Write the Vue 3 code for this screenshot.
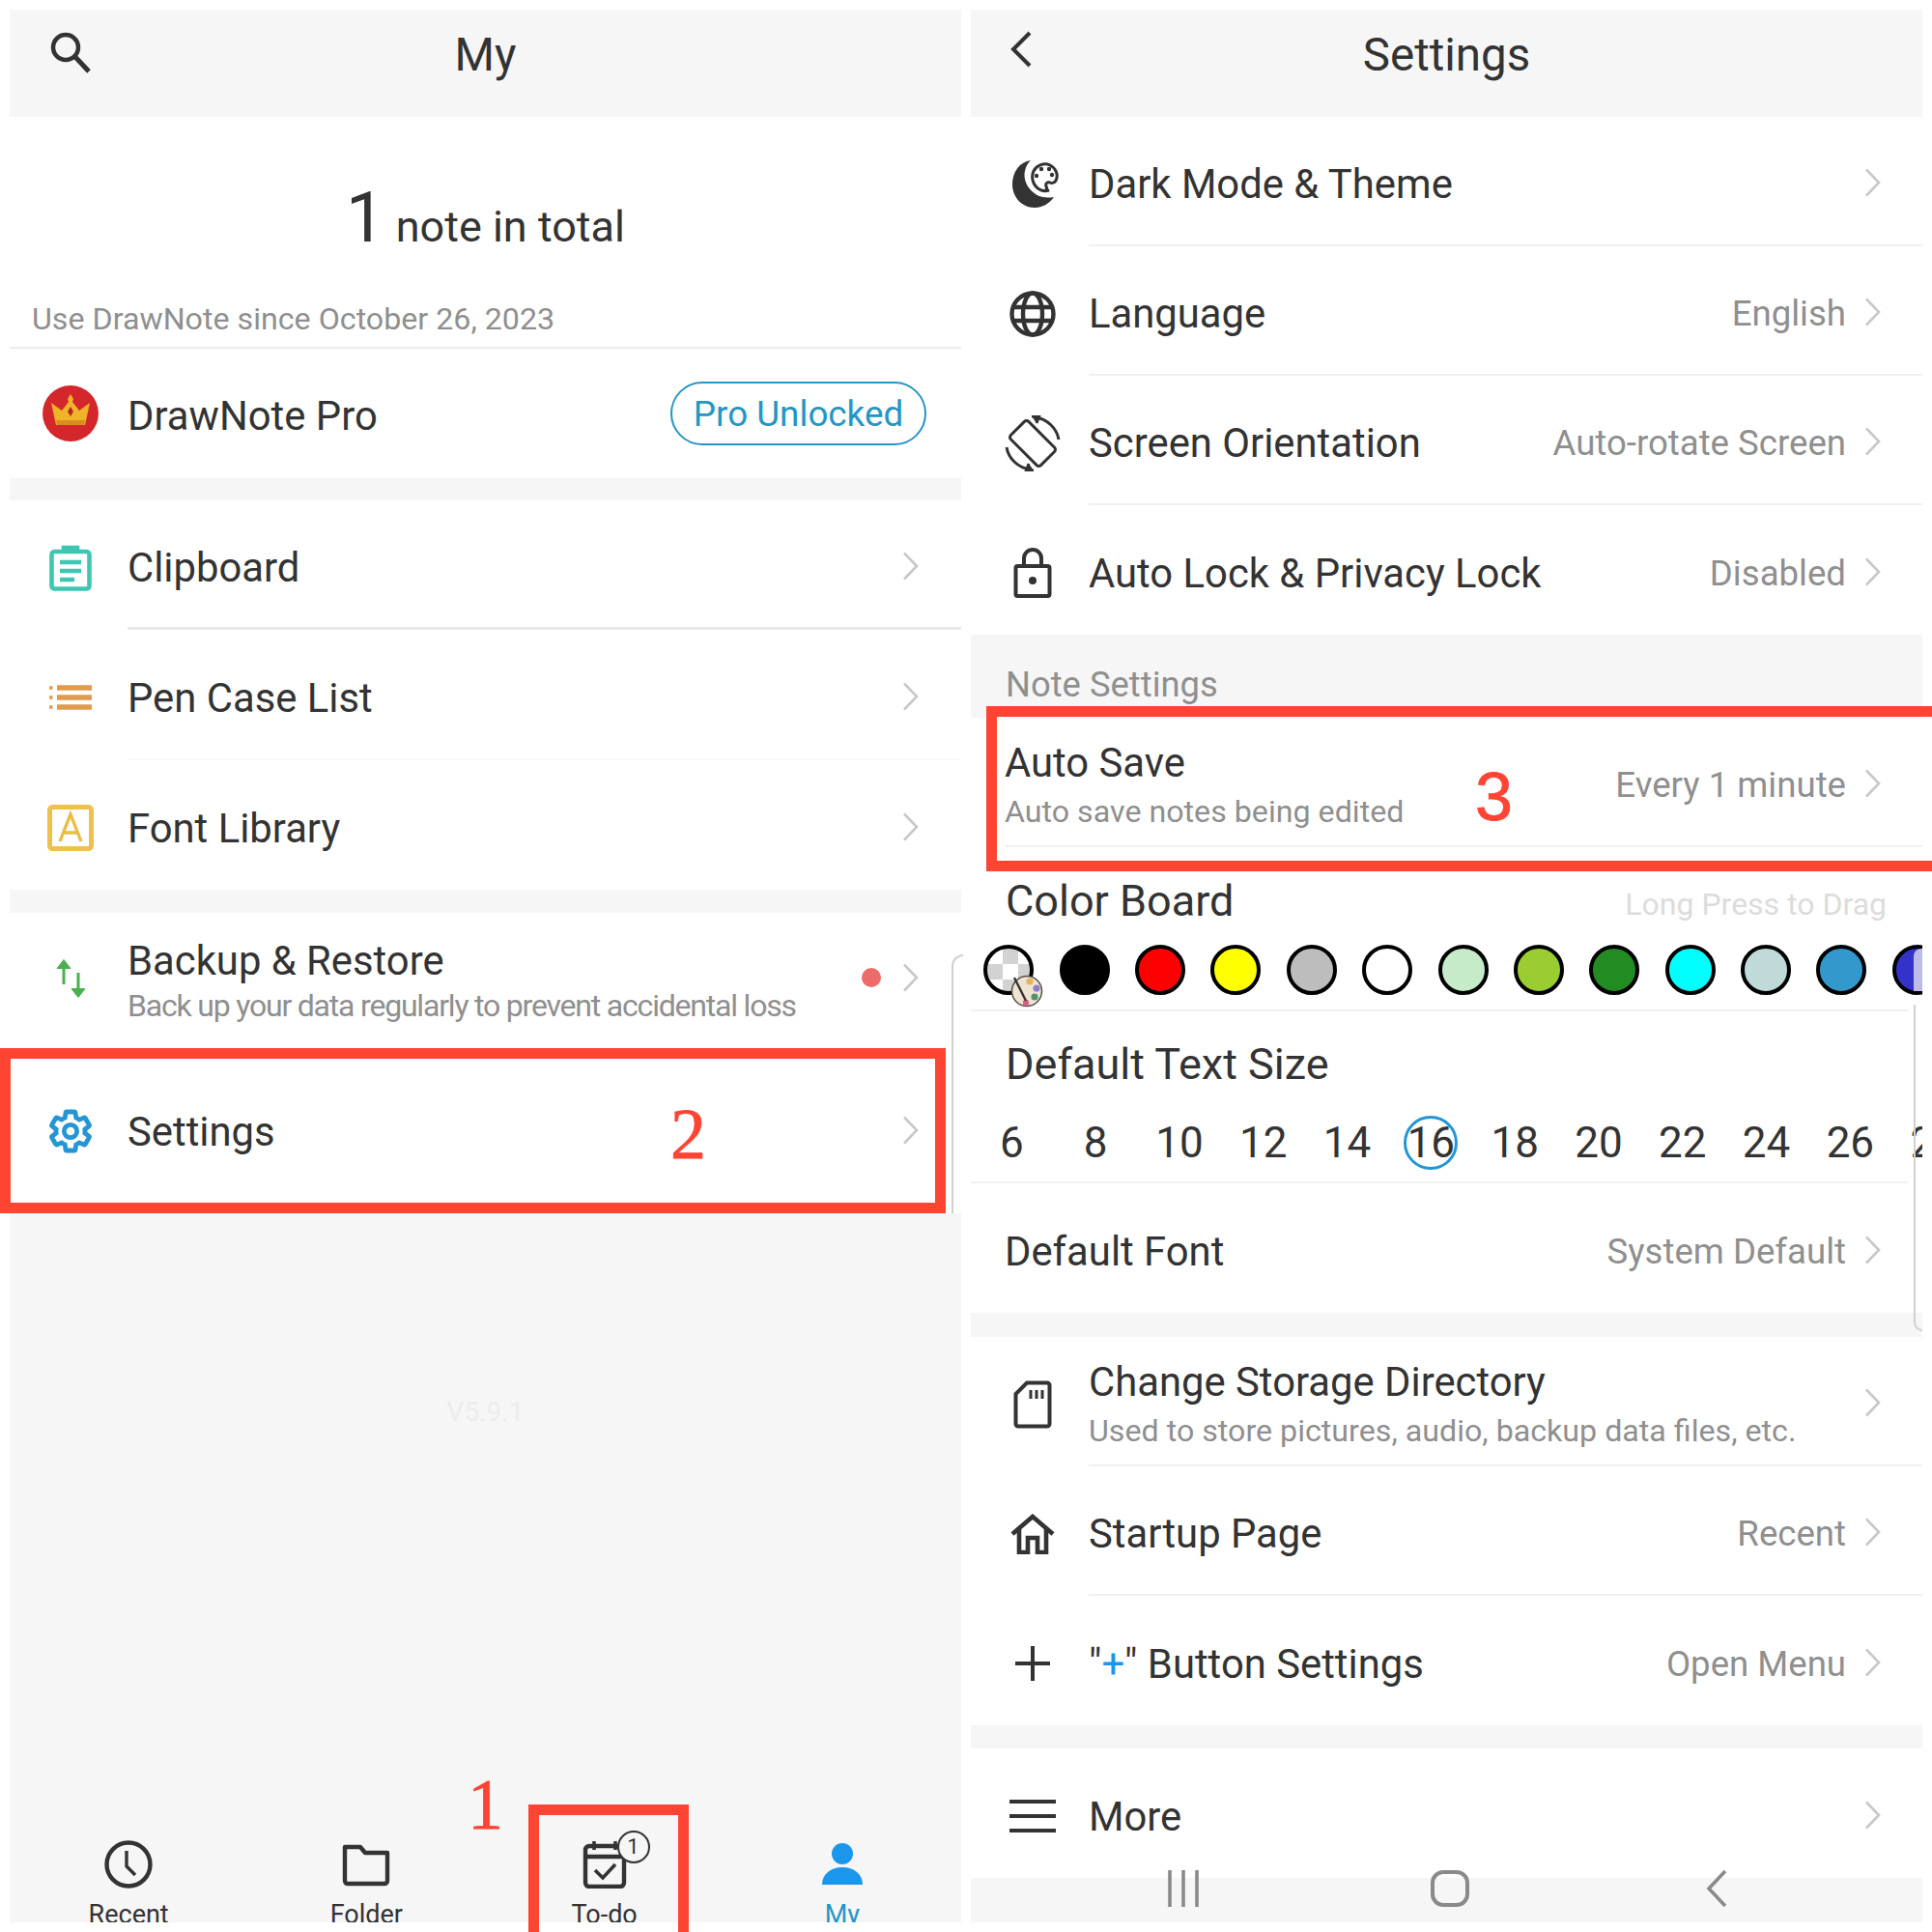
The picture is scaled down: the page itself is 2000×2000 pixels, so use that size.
<template>
  <div class="page">
    <svg class="defs" width="0" height="0">
      <symbol id="chev" viewBox="0 0 17 30"><path d="M2 1.5 15 15 2 28.5" fill="none" stroke="#c8c8c8" stroke-width="2.6" /></symbol>
    </svg>

    <!-- left phone screen -->
    <section class="panel">
      <header class="bar">
        <svg class="bar-btn search" viewBox="0 0 44 44" fill="none" stroke="#333" stroke-width="4.5">
          <circle cx="17" cy="17" r="13" />
          <path d="M26.5 26.5 41 42" stroke-width="5" />
        </svg>
        <span>My</span>
      </header>

      <div class="summary">
        <div class="count"><b>1</b> note in total</div>
        <div class="since">Use DrawNote since October 26, 2023</div>
      </div>

      <div class="row pro">
        <div class="ico">
          <svg width="58" height="58" viewBox="0 0 58 58">
            <circle cx="29" cy="29" r="29" fill="#d3272b" />
            <path d="M29 9l3 5-1 3 7 9 11-8-5 23H14L9 18l11 8 7-9-1-3z" fill="#f0b429" />
            <path d="M14 36h30l-1 5H15z" fill="#d98c1f" />
            <path d="M29 22l3 5-3 5-3-5z" fill="#b3261e" />
          </svg>
        </div>
        <div class="row-body plain">
          <span class="title">DrawNote Pro</span>
          <span class="pill">Pro Unlocked</span>
        </div>
      </div>

      <div class="band"></div>

      <div class="row">
        <div class="ico">
          <svg width="44" height="48" viewBox="0 0 44 48" fill="none" stroke="#3fc6b2" stroke-width="4.6">
            <rect x="2.5" y="7" width="39" height="38.5" rx="3" />
            <path d="M15 7V3h14v4" fill="#3fc6b2" />
            <path d="M11 18h22M11 27h22M11 36h15" />
          </svg>
        </div>
        <div class="row-body strong">
          <span class="title">Clipboard</span>
          <svg class="chev"><use href="#chev" /></svg>
        </div>
      </div>
      <div class="row mid">
        <div class="ico">
          <svg width="44" height="26" viewBox="0 0 44 26" fill="none" stroke="#e09c4c" stroke-width="5.4">
            <path d="M0 3h3.5M0 13h3.5M0 23h3.5" stroke-width="3.6" />
            <path d="M8 3h36M8 13h36M8 23h36" />
          </svg>
        </div>
        <div class="row-body faint">
          <span class="title">Pen Case List</span>
          <svg class="chev"><use href="#chev" /></svg>
        </div>
      </div>
      <div class="row">
        <div class="ico">
          <svg width="48" height="48" viewBox="0 0 48 48" fill="none">
            <rect x="2.5" y="2.5" width="43" height="43" rx="3" stroke="#eec14c" stroke-width="5" />
            <path d="M13 38 24 10l11 28M17 29h14" stroke="#e9bd4a" stroke-width="3.4" />
          </svg>
        </div>
        <div class="row-body plain">
          <span class="title">Font Library</span>
          <svg class="chev"><use href="#chev" /></svg>
        </div>
      </div>

      <div class="band wide"></div>

      <div class="row tall">
        <div class="ico">
          <svg width="33" height="42" viewBox="0 0 33 42" fill="#4caf50" stroke="#4caf50" stroke-width="3">
            <path d="M9 8v19" fill="none" />
            <path d="M2 10.5 9 1.5l7 9z" stroke-width="1" />
            <path d="M24 15v19" fill="none" />
            <path d="M17 31.5 24 40.5l7-9z" stroke-width="1" />
          </svg>
        </div>
        <div class="row-body plain">
          <div class="stack">
            <span class="title">Backup &amp; Restore</span>
            <span class="sub tight">Back up your data regularly to prevent accidental loss</span>
          </div>
          <i class="dot"></i>
          <svg class="chev"><use href="#chev" /></svg>
        </div>
      </div>
      <div class="row settings-row">
        <div class="ico">
          <svg width="50" height="50" viewBox="0 0 24 24" fill="none" stroke="#2596d4" stroke-width="2.3">
            <path d="M19.14 12.94c.04-.3.06-.61.06-.94 0-.32-.02-.64-.07-.94l2.03-1.58c.18-.14.23-.41.12-.61l-1.92-3.32c-.12-.22-.37-.29-.59-.22l-2.39.96c-.5-.38-1.03-.7-1.62-.94l-.36-2.54c-.04-.24-.24-.41-.48-.41h-3.84c-.24 0-.43.17-.47.41l-.36 2.54c-.59.24-1.13.57-1.62.94l-2.39-.96c-.22-.08-.47 0-.59.22L2.74 8.87c-.12.21-.08.47.12.61l2.03 1.58c-.05.3-.09.63-.09.94s.02.64.07.94l-2.03 1.58c-.18.14-.23.41-.12.61l1.92 3.32c.12.22.37.29.59.22l2.39-.96c.5.38 1.03.7 1.62.94l.36 2.54c.05.24.24.41.48.41h3.84c.24 0 .44-.17.47-.41l.36-2.54c.59-.24 1.13-.56 1.62-.94l2.39.96c.22.08.47 0 .59-.22l1.92-3.32c.12-.22.07-.47-.12-.61l-2.01-1.58z" />
            <circle cx="12" cy="12" r="3.2" />
          </svg>
        </div>
        <div class="row-body plain">
          <span class="title">Settings</span>
          <svg class="chev"><use href="#chev" /></svg>
        </div>
      </div>

      <div class="empty">
        <span class="version">V5.9.1</span>
        <nav class="tabs">
          <div class="tab">
            <svg width="50" height="50" viewBox="0 0 50 50" fill="none" stroke="#333" stroke-width="4.4">
              <circle cx="25" cy="25" r="22.5" />
              <path d="M23 11v16l9 9" stroke-width="3.4" />
            </svg>
            <span>Recent</span>
          </div>
          <div class="tab">
            <svg width="50" height="50" viewBox="0 0 50 50" fill="none" stroke="#333" stroke-width="4.4">
              <path d="M3 7h16l5 6h23v29a3 3 0 0 1-3 3H6a3 3 0 0 1-3-3z" stroke-linejoin="round" />
            </svg>
            <span>Folder</span>
          </div>
          <div class="tab">
            <svg width="50" height="50" viewBox="0 0 50 50" fill="none" stroke="#333" stroke-width="4.4">
              <rect x="5" y="6" width="40" height="42" rx="4" />
              <path d="M5 17h40" />
              <path d="M14 1v9M36 1v9" stroke-width="3.6" />
              <path d="M15 31l8 8 13-14" stroke-width="3.6" />
            </svg>
            <i class="badge">1</i>
            <span>To-do</span>
          </div>
          <div class="tab active">
            <svg width="50" height="50" viewBox="0 0 50 50" fill="#1a97ec">
              <circle cx="25" cy="14" r="11" />
              <path d="M4 46c0-11 9-18 21-18s21 7 21 18z" />
            </svg>
            <span>My</span>
          </div>
        </nav>
      </div>
    </section>

    <!-- right phone screen -->
    <section class="panel right">
      <header class="bar">
        <svg class="bar-btn back" viewBox="0 0 24 38" fill="none" stroke="#333" stroke-width="4">
          <path d="M21 2 4 19l17 17" />
        </svg>
        <span>Settings</span>
      </header>

      <div class="row">
        <div class="ico">
          <svg width="54" height="50" viewBox="0 0 54 50">
            <path d="M25 0C13 2 6 12 6 25c0 13 10 24 23 24 8 0 15-4 20-11-6 1-13 1-19-3-9-6-13-16-11-24 1-5 3-8 6-11z" fill="#333" />
            <path d="M44 31c-3 1-7 1-10-1-7-4-9-13-6-19s11-9 17-6 9 10 6 16c-1 2-4 3-6 2-3-1-5 1-4 4 1 2 1 3-1 4z" fill="none" stroke="#333" stroke-width="3" />
            <circle cx="31" cy="16" r="2.2" fill="#333" /><circle cx="36" cy="9" r="2.2" fill="#333" />
            <circle cx="44" cy="9" r="2.2" fill="#333" /><circle cx="47" cy="15" r="2.2" fill="#333" />
          </svg>
        </div>
        <div class="row-body">
          <span class="title">Dark Mode &amp; Theme</span>
          <svg class="chev"><use href="#chev" /></svg>
        </div>
      </div>
      <div class="row">
        <div class="ico">
          <svg width="48" height="48" viewBox="0 0 48 48" fill="none" stroke="#333" stroke-width="4.4">
            <circle cx="24" cy="24" r="21.5" />
            <ellipse cx="24" cy="24" rx="10" ry="21.5" />
            <path d="M3 17h42M3 31h42" />
          </svg>
        </div>
        <div class="row-body">
          <span class="title">Language</span>
          <span class="value">English</span>
          <svg class="chev"><use href="#chev" /></svg>
        </div>
      </div>
      <div class="row">
        <div class="ico">
          <svg width="58" height="58" viewBox="0 0 58 58" fill="none" stroke="#333" stroke-width="3">
            <rect x="16" y="7" width="26" height="44" rx="3" transform="rotate(-45 29 29)" />
            <path d="M32 2c12 2 22 11 24 23M26 56C14 54 4 45 2 33" />
            <path d="M28 1l8-1-3 8M30 57l-8 1 3-8" fill="#333" />
          </svg>
        </div>
        <div class="row-body">
          <span class="title">Screen Orientation</span>
          <span class="value">Auto-rotate Screen</span>
          <svg class="chev"><use href="#chev" /></svg>
        </div>
      </div>
      <div class="row">
        <div class="ico">
          <svg width="40" height="52" viewBox="0 0 40 52" fill="none" stroke="#333" stroke-width="4">
            <rect x="2.5" y="19" width="35" height="31" rx="2" />
            <path d="M11 19v-8a9 9 0 0 1 18 0v8" />
            <circle cx="20" cy="34" r="4" fill="#333" stroke="none" />
          </svg>
        </div>
        <div class="row-body plain">
          <span class="title">Auto Lock &amp; Privacy Lock</span>
          <span class="value">Disabled</span>
          <svg class="chev"><use href="#chev" /></svg>
        </div>
      </div>

      <div class="section-label">Note Settings</div>

      <div class="row flush">
        <div class="row-body">
          <div class="stack">
            <span class="title">Auto Save</span>
            <span class="sub">Auto save notes being edited</span>
          </div>
          <span class="value">Every 1 minute</span>
          <svg class="chev"><use href="#chev" /></svg>
        </div>
      </div>

      <div class="color-board">
        <div class="block-head">
          <span class="title big">Color Board</span>
          <span class="hint">Long Press to Drag</span>
        </div>
        <div class="swatches">
          <div v-for="(c, i) in swatches" :key="i" class="cell">
            <i class="swatch" :class="{ clear: !c }" :style="c ? { background: c } : null"></i>
          </div>
          <svg class="palette" width="34" height="34" viewBox="0 0 34 34">
            <circle cx="17" cy="17" r="15.5" fill="#efe3d2" stroke="#55504a" stroke-width="1.5" />
            <circle cx="20" cy="7" r="3.6" fill="#e5b35c" /><circle cx="27" cy="14" r="3.6" fill="#8a82c9" />
            <circle cx="25" cy="23" r="3.6" fill="#4f9470" /><circle cx="16" cy="29" r="3.2" fill="#d9608a" />
            <path d="M4 3l12 24" stroke="#333" stroke-width="2.4" />
          </svg>
          <i class="swatch-edge"></i>
        </div>
      </div>

      <div class="text-size">
        <div class="title big">Default Text Size</div>
        <div class="sizes">
          <span v-for="s in sizes" :key="s" class="size" :class="{ on: s === 16 }">{{ s }}</span>
        </div>
      </div>

      <div class="row flush">
        <div class="row-body plain">
          <span class="title">Default Font</span>
          <span class="value">System Default</span>
          <svg class="chev"><use href="#chev" /></svg>
        </div>
      </div>

      <div class="band wider"></div>

      <div class="row">
        <div class="ico">
          <svg width="40" height="50" viewBox="0 0 40 50" fill="none" stroke="#333" stroke-width="4">
            <path d="M14 2.5h21a2.5 2.5 0 0 1 2.5 2.5v40a2.5 2.5 0 0 1-2.5 2.5H5A2.5 2.5 0 0 1 2.5 45V14z" />
            <path d="M18 10v9M24 10v9M30 10v9" stroke-width="3" />
          </svg>
        </div>
        <div class="row-body">
          <div class="stack">
            <span class="title">Change Storage Directory</span>
            <span class="sub">Used to store pictures, audio, backup data files, etc.</span>
          </div>
          <svg class="chev"><use href="#chev" /></svg>
        </div>
      </div>
      <div class="row">
        <div class="ico">
          <svg width="46" height="42" viewBox="0 0 46 42" fill="none" stroke="#333" stroke-width="4.6">
            <path d="M2 21 23 3l21 18" />
            <path d="M9 16v24h9V25h10v15h9V16" />
          </svg>
        </div>
        <div class="row-body">
          <span class="title">Startup Page</span>
          <span class="value">Recent</span>
          <svg class="chev"><use href="#chev" /></svg>
        </div>
      </div>
      <div class="row">
        <div class="ico">
          <svg width="36" height="36" viewBox="0 0 36 36" fill="none" stroke="#333" stroke-width="4">
            <path d="M0 18h36M18 0v36" />
          </svg>
        </div>
        <div class="row-body plain">
          <span class="title">"<em>+</em>" Button Settings</span>
          <span class="value">Open Menu</span>
          <svg class="chev"><use href="#chev" /></svg>
        </div>
      </div>

      <div class="band wide"></div>

      <div class="row">
        <div class="ico">
          <svg width="48" height="34" viewBox="0 0 48 34" fill="none" stroke="#333" stroke-width="4">
            <path d="M0 2h48M0 17h48M0 32h48" />
          </svg>
        </div>
        <div class="row-body plain">
          <span class="title">More</span>
          <svg class="chev"><use href="#chev" /></svg>
        </div>
      </div>

      <div class="sys-nav">
        <svg width="36" height="38" viewBox="0 0 36 38" fill="none" stroke="#8a8a8a" stroke-width="3.6"><path d="M4 0v38M18 0v38M32 0v38" /></svg>
        <svg width="40" height="38" viewBox="0 0 40 38" fill="none" stroke="#8a8a8a" stroke-width="4"><rect x="2" y="2" width="36" height="34" rx="11" /></svg>
        <svg width="24" height="38" viewBox="0 0 24 38" fill="none" stroke="#8a8a8a" stroke-width="3.6"><path d="M21 1 4 19l17 18" /></svg>
      </div>
    </section>

    <!-- things drawn on top of the screens -->
    <i class="edge edge-left"></i>
    <i class="edge edge-right"></i>
    <div class="mark mark-1"></div>
    <div class="mark mark-2"></div>
    <div class="mark mark-3"></div>
    <span class="num num-1">1</span>
    <span class="num num-2">2</span>
    <span class="num num-3">3</span>
  </div>
</template>

<script setup>
const swatches = [
  null, '#000000', '#ff0000', '#ffff00', '#bdbdbd', '#ffffff', '#c6ebc9',
  '#9acd32', '#228b22', '#00ffff', '#c0d9d9', '#3399cc', '#3333cc'
]
const sizes = [6, 8, 10, 12, 14, 16, 18, 20, 22, 24, 26, 28]
</script>

<style>
html, body {
  margin: 0;
  background: #fff;
}
</style>

<style scoped>
.page {
  position: relative;
  width: 2000px;
  height: 2000px;
  box-sizing: border-box;
  padding: 10px;
  display: flex;
  gap: 10px;
  overflow: hidden;
  background: #fff;
  color: #333;
  font-family: Roboto, "Liberation Sans", sans-serif;
}

.defs {
  position: absolute;
}

.panel {
  flex: 1;
  min-width: 0;
  display: flex;
  flex-direction: column;
  overflow: hidden;
}

.bar {
  position: relative;
  height: 111px;
  flex: none;
  display: flex;
  align-items: center;
  justify-content: center;
  background: #f6f6f6;
  font-size: 47.5px;
  padding-bottom: 18px;
  box-sizing: border-box;
}

.bar-btn {
  position: absolute;
}

.search {
  left: 41px;
  top: 22px;
  width: 44px;
  height: 44px;
}

.back {
  left: 40px;
  top: 22px;
  width: 24px;
  height: 38px;
}

.summary {
  height: 240px;
  flex: none;
  box-sizing: border-box;
  border-bottom: 2px solid #ececec;
  display: flex;
  flex-direction: column;
  position: relative;
}

.count {
  margin-top: 63px;
  text-align: center;
  font-size: 45px;
  line-height: 84px;
  color: #333;
}

.count b {
  font-size: 72px;
  font-weight: 400;
}

.since {
  position: absolute;
  left: 23px;
  bottom: 9px;
  font-size: 32.2px;
  line-height: 40px;
  color: #8f8f8f;
}

.row {
  height: 134px;
  flex: none;
  display: flex;
  align-items: center;
}

.row.mid {
  height: 135px;
}

.row.tall {
  height: 140px;
}

.row.settings-row {
  height: 171px;
}

.row.flush {
  padding-left: 35px;
}

.ico {
  width: 122px;
  flex: none;
  box-sizing: border-box;
  padding: 5px 0 0 4px;
  display: flex;
  justify-content: center;
  align-items: center;
}

.right .ico {
  padding-left: 6px;
}

.row.pro .ico {
  padding-top: 0;
}

.row.tall .ico {
  padding-top: 0;
  margin-top: -5px;
}

.row.settings-row .ico {
  padding-top: 0;
}

.row-body {
  flex: 1;
  min-width: 0;
  height: 100%;
  box-sizing: border-box;
  display: flex;
  align-items: center;
  padding: 8px 44px 0 0;
  border-bottom: 2px solid #f0f0f0;
}

.right .row-body {
  padding-right: 43px;
}

.row-body.plain {
  border-bottom: 0;
}

.row-body.strong {
  border-bottom: 3px solid #e9e9e9;
}

.row-body.faint {
  border-bottom-color: #f9f9f9;
}

.row.pro .row-body {
  padding-top: 6px;
}

.row.tall .row-body {
  padding-top: 2px;
}

.row.settings-row .row-body {
  padding-top: 3px;
}

.stack {
  display: flex;
  flex-direction: column;
  gap: 6px;
  min-width: 0;
  margin-right: auto;
}

.row.tall .stack {
  gap: 2px;
}

.title {
  font-size: 41.8px;
  line-height: 48px;
  color: #333;
  margin-right: auto;
}

.title.big {
  font-size: 45px;
}

.title em {
  font-style: normal;
  color: #1a97ec;
}

.sub {
  font-size: 32.2px;
  line-height: 40px;
  color: #8f8f8f;
}

.sub.tight {
  font-size: 32px;
  letter-spacing: -1.2px;
}

.value {
  font-size: 36.6px;
  line-height: 44px;
  color: #8f8f8f;
  margin-right: 19px;
}

.chev {
  width: 17px;
  height: 30px;
  flex: none;
  margin-top: -4px;
}

.row.tall .chev {
  margin-top: -8px;
}

.pill {
  height: 66px;
  width: 265px;
  margin: -6px -8px 0 0;
  box-sizing: border-box;
  border: 2px solid #2596c4;
  border-radius: 33px;
  display: flex;
  align-items: center;
  justify-content: center;
  font-size: 36.8px;
  color: #2596c4;
}

.dot {
  width: 20px;
  height: 20px;
  border-radius: 50%;
  background: #ee6b6b;
  margin: -8px 22px 0 0;
}

.band {
  height: 23px;
  flex: none;
  background: #f6f6f6;
}

.band.wide {
  height: 24px;
}

.band.wider {
  height: 25px;
}

.section-label {
  height: 86px;
  flex: none;
  box-sizing: border-box;
  background: #f6f6f6;
  padding: 30px 0 0 36px;
  font-size: 36.4px;
  line-height: 44px;
  color: #8f8f8f;
}

.color-board {
  height: 170px;
  flex: none;
  box-sizing: border-box;
  margin-right: 15px;
  border-bottom: 2px solid #f0f0f0;
  position: relative;
}

.block-head {
  display: flex;
  align-items: center;
  justify-content: space-between;
  padding: 30px 22px 0 36px;
}

.hint {
  font-size: 32px;
  line-height: 44px;
  margin-top: 7px;
  color: #dcdcdc;
}

.swatches {
  position: relative;
  display: flex;
  width: 985px;
  height: 76px;
  margin-top: 18px;
  overflow: hidden;
}

.cell {
  width: 78.4px;
  flex: none;
  height: 56px;
  display: flex;
  align-items: center;
  justify-content: center;
}

.swatch {
  width: 52px;
  height: 52px;
  box-sizing: border-box;
  border: 4px solid #000;
  border-radius: 50%;
}

.swatch.clear {
  background: repeating-conic-gradient(#d2d2d2 0 25%, #fff 0 50%) 0 0 / 32px 32px;
}

.palette {
  position: absolute;
  left: 41px;
  top: 33px;
}

.swatch-edge {
  position: absolute;
  left: 976px;
  top: 6px;
  width: 10px;
  height: 44px;
  border-radius: 8px 0 0 0;
  background: #bdbbe8;
}

.text-size {
  height: 178px;
  flex: none;
  box-sizing: border-box;
  margin-right: 15px;
  border-bottom: 2px solid #f0f0f0;
  padding: 31px 0 0 36px;
}

.sizes {
  display: flex;
  margin: 29px 0 0 -37px;
  width: 1100px;
}

.size {
  position: relative;
  width: 86.8px;
  flex: none;
  text-align: center;
  font-size: 44px;
  line-height: 56px;
}

.size.on::after {
  content: "";
  position: absolute;
  left: 15.4px;
  top: 0;
  width: 56px;
  height: 56px;
  box-sizing: border-box;
  border: 3px solid #2596d4;
  border-radius: 50%;
}

.empty {
  flex: 1;
  position: relative;
  background: #f6f6f6;
  display: flex;
  flex-direction: column;
  justify-content: flex-end;
  overflow: hidden;
}

.version {
  position: absolute;
  top: 189px;
  left: 0;
  right: 0;
  text-align: center;
  font-size: 28px;
  color: #ececec;
}

.tabs {
  height: 85px;
  display: flex;
}

.tab {
  position: relative;
  flex: 1;
  display: flex;
  flex-direction: column;
  align-items: center;
  gap: 12px;
  font-size: 27px;
  line-height: 30px;
  color: #333;
}

.tab svg {
  flex: none;
}

.tab.active {
  color: #2596c4;
}

.badge {
  position: absolute;
  left: 136px;
  top: -10px;
  width: 34px;
  height: 34px;
  box-sizing: border-box;
  border: 2px solid #333;
  border-radius: 50%;
  background: #f6f6f6;
  font-style: normal;
  font-size: 22px;
  line-height: 30px;
  text-align: center;
}

.sys-nav {
  position: relative;
  flex: 1;
  background: #f6f6f6;
}

.sys-nav svg {
  position: absolute;
  top: -8px;
}

.sys-nav svg:nth-child(1) { left: 202px; }
.sys-nav svg:nth-child(2) { left: 476px; }
.sys-nav svg:nth-child(3) { left: 760px; }

.edge {
  position: absolute;
  box-sizing: border-box;
  border: 2px solid #d0d0d0;
  border-width: 0 0 0 2px;
}

.edge-left {
  left: 985px;
  top: 988px;
  height: 268px;
  width: 12px;
  border-top-width: 2px;
  border-radius: 12px 0 0 0;
}

.edge-right {
  left: 1981px;
  top: 1040px;
  height: 338px;
  width: 9px;
  border-bottom-width: 2px;
  border-radius: 0 0 0 12px;
}

.mark {
  position: absolute;
  box-sizing: border-box;
  border: 11px solid #ff4433;
}

.mark-1 {
  left: 547px;
  top: 1868px;
  width: 166px;
  height: 150px;
}

.mark-2 {
  left: 0;
  top: 1085px;
  width: 979px;
  height: 171px;
}

.mark-3 {
  left: 1021px;
  top: 731px;
  width: 990px;
  height: 171px;
}

.num {
  position: absolute;
  font-family: "Liberation Serif", serif;
  font-size: 74px;
  line-height: 74px;
  color: #ff4433;
  -webkit-text-stroke: 0.8px #ff4433;
}

.num-1 {
  left: 484px;
  top: 1831px;
}

.num-2 {
  left: 694px;
  top: 1137px;
}

.num-3 {
  left: 1527px;
  top: 788px;
  font-family: "Liberation Sans", sans-serif;
  font-size: 70px;
}
</style>
